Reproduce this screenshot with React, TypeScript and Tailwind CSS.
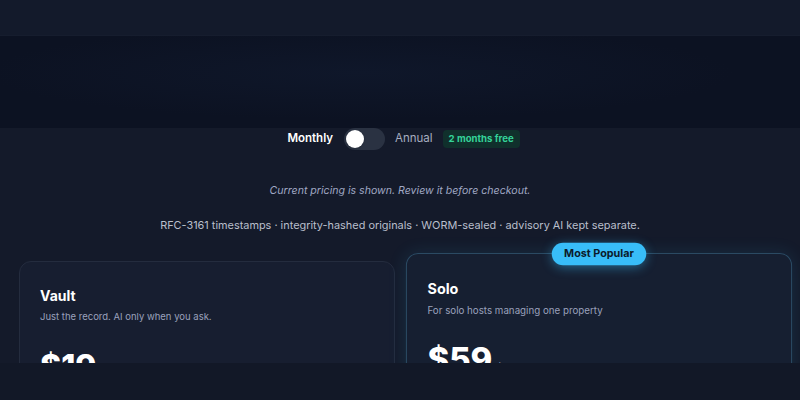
export default function App() {
  return (
    <div className="flex h-[400px] w-[800px] flex-col overflow-hidden bg-[#141a2a] font-['Inter',sans-serif]">
      <header className="h-9 shrink-0 border-b border-[#161d2e] bg-[#131a2b]" />
      <div className="h-[92px] shrink-0 bg-[#0c1222] bg-[radial-gradient(ellipse_at_45%_40%,#0f172a_0%,#0c1222_60%)]" />

      <main className="flex min-h-0 flex-1 flex-col items-center overflow-hidden">
        <div className="ml-[7px] flex h-[22px] items-center">
          <span className="text-[11.5px] font-semibold text-white">Monthly</span>
          <button
            type="button"
            className="ml-[11px] flex h-[22px] w-[41px] items-center rounded-full bg-[#2a3242] px-[2px]"
          >
            <span className="h-[18px] w-[18px] rounded-full bg-white shadow" />
          </button>
          <span className="ml-[10px] text-[11.5px] text-[#a7aec0]">Annual</span>
          <span className="ml-[10px] flex h-[18px] items-center rounded bg-[#10302c] px-[6px] text-[9.6px] font-bold text-[#34d399]">
            2 months free
          </span>
        </div>

        <p className="mt-[33px] text-[10.6px] leading-4 italic text-[#a0a8c4]">
          Current pricing is shown. Review it before checkout.
        </p>
        <p className="mt-[18px] text-[10.9px] leading-4 text-[#b9bfcc]">
          RFC-3161 timestamps · integrity-hashed originals · WORM-sealed · advisory AI kept separate.
        </p>

        <div className="mt-[28px] grid w-full grid-cols-[376px_376px] gap-4 pl-[19px]">
          <div className="h-[300px] rounded-xl border border-[#242c3e] bg-[#171e30] px-5 pt-6">
            <h3 className="text-[14px] font-bold leading-5 text-white">Vault</h3>
            <p className="mt-1 text-[9.5px] text-[#9aa1bc]">Just the record. AI only when you ask.</p>
            <div className="mt-[27px] text-[32px] font-extrabold leading-none text-white">$19</div>
          </div>

          <div className="relative h-[300px] origin-top -translate-y-2 scale-[1.027] rounded-xl border border-[#2b4a63] bg-[#161f31] px-5 pt-6 shadow-[0_0_18px_rgba(56,189,248,0.12)]">
            <span className="absolute -top-[11px] left-1/2 flex h-[22px] -translate-x-1/2 items-center rounded-full bg-[#38bdf8] px-3 text-[10.5px] font-bold text-[#0b1a2b] shadow-[0_2px_10px_rgba(56,189,248,0.45)]">
              Most Popular
            </span>
            <h3 className="text-[14px] font-bold leading-5 text-white">Solo</h3>
            <p className="mt-1 text-[9.5px] text-[#9aa1bc]">For solo hosts managing one property</p>
            <div className="mt-[25px] flex items-baseline text-white">
              <span className="text-[32px] font-extrabold leading-none">$59</span>
              <span className="ml-1 text-[11px] text-[#9aa1bc]">/mo</span>
            </div>
          </div>
        </div>
      </main>

      <footer className="h-[37px] shrink-0 bg-[#121827]" />
    </div>
  );
}
